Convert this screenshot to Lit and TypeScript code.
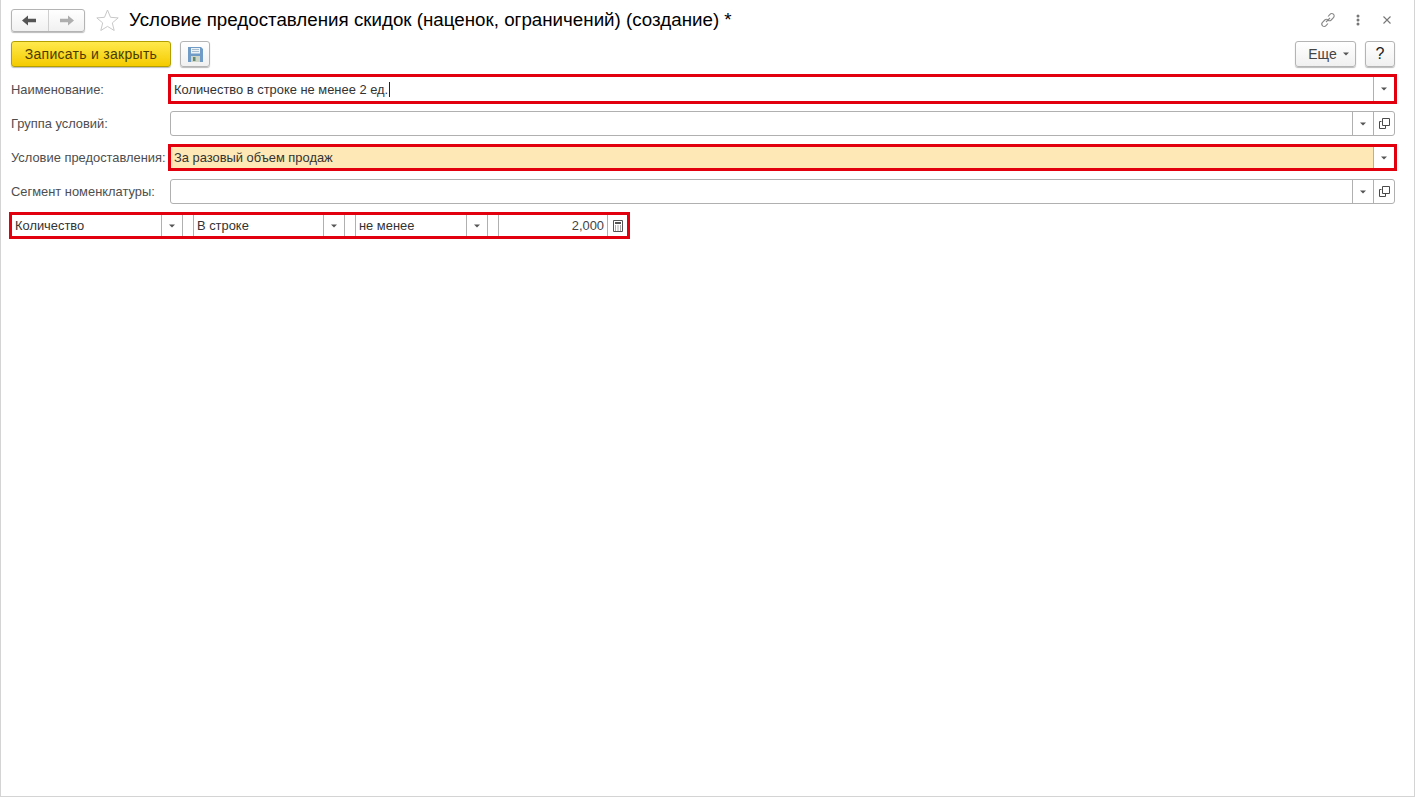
import { LitElement, html, css, svg } from "lit";
import { customElement } from "lit/decorators.js";

const arrow = svg`<svg class="tri" width="6" height="4" viewBox="0 0 6 4"><path d="M0 .5h6L3 3.500z" fill="#555"/></svg>`;
const openIcon = svg`<svg width="11" height="11" viewBox="0 0 11 11" fill="none" stroke="#4a4a4a" stroke-width="1"><path d="M2.500 3.500H.5v7h6V8"/><path d="M3.500.5h7v7h-7z" fill="#fff"/></svg>`;

@customElement("app-root")
export class AppRoot extends LitElement {
  static styles = css`
    :host { display: block; }
    * { box-sizing: border-box; }
    .page {
      width: 1415px; height: 797px; background: #fff;
      border-left: 1px solid #d4d4d4; border-right: 1px solid #d4d4d4; border-bottom: 1px solid #d4d4d4;
      padding: 8px 19px 0 10px;
      font: 12.900px "Liberation Sans", Arial, sans-serif; color: #333;
      display: flex; flex-direction: column;
    }
    .head { display: flex; align-items: center; height: 24px; }
    .nav {
      width: 74px; height: 23px; display: flex; border: 1px solid #b4b4b4; border-radius: 3px;
      background: linear-gradient(#fff, #f1f1f1); box-shadow: 0 1px 1px #bbb;
    }
    .nav span { flex: 1; display: flex; align-items: center; justify-content: center; }
    .nav span + span { border-left: 1px solid #cfcfcf; }
    .star { margin-left: 11px; display: flex; }
    .title { margin-left: 10px; font-size: 18.760px; color: #000; white-space: nowrap; line-height: 24px; }
    .winbtns { margin-left: auto; display: flex; align-items: center; margin-right: 1px; }
    .winbtns > * { display: block; }
    .dots { margin-left: 20px; }
    .close { margin-left: 23px; margin-right: 3px; }
    .cmd { display: flex; align-items: center; margin-top: 9px; height: 26px; }
    .btn {
      height: 26px; display: flex; align-items: center; justify-content: center;
      border: 1px solid #b4b4b4; border-radius: 3px;
      background: linear-gradient(#fff, #f0f0f0); box-shadow: 0 1px 1px #bbb;
    }
    .primary {
      width: 160px; border-color: #b3a000; background: linear-gradient(#ffe94d, #f5cb00);
      font-size: 14px; letter-spacing: 0.28px; color: #4a3c00;
    }
    .save { width: 30px; margin-left: 9px; }
    .more { width: 61px; margin-left: auto; font-size: 14px; color: #444; gap: 6px; padding-left: 6px; }
    .help { width: 30px; margin-left: 9px; font-size: 16px; color: #222; }
    .rows { margin-top: 7px; display: flex; flex-direction: column; }
    .row { display: flex; align-items: center; height: 25px; margin-top: 9px; }
    .row.first { height: 30px; margin-top: 0; }
    .row.second { margin-top: 7px; }
    .label { width: 159px; color: #4e4e4e; white-space: nowrap; }
    .field {
      flex: 1; height: 25px; display: flex; border: 1px solid #b0b0b0; border-radius: 3px; background: #fff;
      color: #333;
    }
    .marked { border: 3px solid #e2000f; border-radius: 0; margin: 0 -2px; height: 27px; }
    .first .marked { height: 30px; }
    .text { flex: 1; display: flex; align-items: center; padding-left: 3px; min-width: 0; }
    .fill { background: #fee8b5; }
    .cursor { width: 1px; height: 15px; background: #222; margin-left: 1px; }
    .cell { width: 21px; display: flex; align-items: center; justify-content: center; border-left: 1px solid #b0b0b0; }
    .w { background: #fff; }
    .bottom {
      margin: 8px 0 0 -2px; width: 621px; height: 27px; border: 3px solid #e2000f; display: flex;
      color: #333;
    }
    .seg { display: flex; align-items: center; padding: 0 0 1px 3px; }
    .s1 { width: 149px; }
    .s2 { width: 130px; border-left: 1px solid #b0b0b0; }
    .s3 { width: 111px; border-left: 1px solid #b0b0b0; }
    .s4 { flex: 1; justify-content: flex-end; padding-right: 3px; border-left: 1px solid #b0b0b0; color: #444; }
    .drop { width: 21px; display: flex; align-items: center; justify-content: center; border-left: 1px solid #b0b0b0; }
    .gap { width: 11px; border-left: 1px solid #b0b0b0; }
    .calc { width: 20px; display: flex; align-items: center; justify-content: center; border-left: 1px solid #b0b0b0; }
  `;

  private plainRow(label: string, cls = "") {
    return html`<div class="row ${cls}">
      <div class="label">${label}</div>
      <div class="field">
        <div class="text"></div>
        <div class="cell">${arrow}</div>
        <div class="cell">${openIcon}</div>
      </div>
    </div>`;
  }

  render() {
    return html`<div class="page">
      <div class="head">
        <div class="nav">
          <span><svg width="15" height="11" viewBox="0 0 15 11"><path d="M0 5.500 6 .5v3.200h8v3.600H6v3.200z" fill="#555"/></svg></span>
          <span><svg width="15" height="11" viewBox="0 0 15 11"><path d="M15 5.500 9 .5v3.200H1v3.600h8v3.200z" fill="#aeaeae"/></svg></span>
        </div>
        <div class="star"><svg width="23" height="22" viewBox="0 0 23 22"><path d="M11.500 1l3 7.300 7.700.6-5.900 5 1.900 7.600-6.700-4.100-6.700 4.100 1.900-7.600-5.900-5 7.700-.6z" fill="#fff" stroke="#c8c8c8"/></svg></div>
        <div class="title">Условие предоставления скидок (наценок, ограничений) (создание) *</div>
        <div class="winbtns">
          <svg width="16" height="16" viewBox="0 0 16 16" fill="none" stroke="#888" stroke-width="1.100"><path d="M6 10l4-4"/><path d="M8 4.500l2-2.200a2.400 2.400 0 0 1 3.500 3.300l-2.300 2.400a2.400 2.400 0 0 1-3.300 0"/><path d="M8 11.500l-2 2.200a2.400 2.400 0 0 1-3.500-3.300l2.300-2.400a2.400 2.400 0 0 1 3.300 0"/></svg>
          <svg class="dots" width="4" height="12" viewBox="0 0 4 12" fill="#777"><circle cx="2" cy="2" r="1.500"/><circle cx="2" cy="6" r="1.500"/><circle cx="2" cy="10" r="1.500"/></svg>
          <svg class="close" width="8" height="8" viewBox="0 0 8 8" stroke="#777" stroke-width="1.100"><path d="M.5.500l7 7M7.500.500l-7 7"/></svg>
        </div>
      </div>
      <div class="cmd">
        <div class="btn primary">Записать и закрыть</div>
        <div class="btn save"><svg width="15" height="15" viewBox="0 0 15 15"><path d="M0 0h13l2 2v13H0z" fill="#6f9bc6"/><path d="M3 1h9v5.500H3z" fill="#edf2f7"/><path d="M4 2.500h7M4 4.500h7" stroke="#a9bdd0"/><path d="M3 9h9v6H3z" fill="#cfd6c8"/><path d="M5 10h2.500v4H5z" fill="#5f8a74"/></svg></div>
        <div class="btn more">Еще ${arrow}</div>
        <div class="btn help">?</div>
      </div>
      <div class="rows">
        <div class="row first">
          <div class="label">Наименование:</div>
          <div class="field marked">
            <div class="text">Количество в строке не менее 2 ед.<span class="cursor"></span></div>
            <div class="cell">${arrow}</div>
          </div>
        </div>
        ${this.plainRow("Группа условий:", "second")}
        <div class="row">
          <div class="label">Условие предоставления:</div>
          <div class="field marked">
            <div class="text fill">За разовый объем продаж</div>
            <div class="cell w">${arrow}</div>
          </div>
        </div>
        ${this.plainRow("Сегмент номенклатуры:")}
      </div>
      <div class="bottom">
        <div class="seg s1">Количество</div>
        <div class="drop">${arrow}</div><div class="gap"></div>
        <div class="seg s2">В строке</div>
        <div class="drop">${arrow}</div><div class="gap"></div>
        <div class="seg s3">не менее</div>
        <div class="drop">${arrow}</div><div class="gap"></div>
        <div class="seg s4">2,000</div>
        <div class="calc"><svg width="10" height="12" viewBox="0 0 10 12" fill="none" stroke="#555"><path d="M.5.500h9v11h-9z"/><path d="M2 3h6" stroke-width="2"/><path d="M2 6h1M4.500 6h1M7 6h1M2 8h1M4.500 8h1M7 8h1M2 10h1M4.500 10h1M7 10h1" stroke-width="1"/></svg></div>
      </div>
    </div>`;
  }
}
